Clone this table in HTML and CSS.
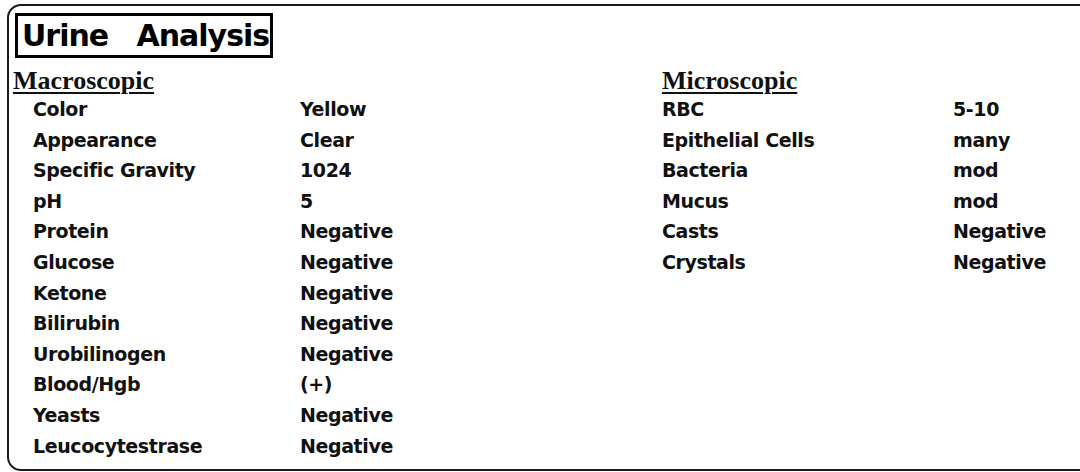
FILE: index.html
```html
<!DOCTYPE html>
<html>
<head>
<meta charset="utf-8">
<link rel="stylesheet" href="styles.css">
</head>
<body>
<div class="panel">
  <div class="title">Urine   Analysis</div>
  <div class="sections">
    <div class="section macro">
      <div class="heading">Macroscopic</div>
      <div class="rows">
        <div class="label">Color</div><div class="value">Yellow</div>
        <div class="label">Appearance</div><div class="value">Clear</div>
        <div class="label">Specific Gravity</div><div class="value">1024</div>
        <div class="label">pH</div><div class="value">5</div>
        <div class="label">Protein</div><div class="value">Negative</div>
        <div class="label">Glucose</div><div class="value">Negative</div>
        <div class="label">Ketone</div><div class="value">Negative</div>
        <div class="label">Bilirubin</div><div class="value">Negative</div>
        <div class="label">Urobilinogen</div><div class="value">Negative</div>
        <div class="label">Blood/Hgb</div><div class="value">(+)</div>
        <div class="label">Yeasts</div><div class="value">Negative</div>
        <div class="label">Leucocytestrase</div><div class="value">Negative</div>
      </div>
    </div>
    <div class="section micro">
      <div class="heading">Microscopic</div>
      <div class="rows">
        <div class="label">RBC</div><div class="value">5-10</div>
        <div class="label">Epithelial Cells</div><div class="value">many</div>
        <div class="label">Bacteria</div><div class="value">mod</div>
        <div class="label">Mucus</div><div class="value">mod</div>
        <div class="label">Casts</div><div class="value">Negative</div>
        <div class="label">Crystals</div><div class="value">Negative</div>
      </div>
    </div>
  </div>
</div>
</body>
</html>
```
FILE: styles.css
```css
html, body {
  margin: 0;
  padding: 0;
  background: #fff;
  overflow: hidden;
}
body {
  width: 1080px;
  height: 472px;
  font-family: "DejaVu Sans", Verdana, sans-serif;
  color: #111;
}
.panel {
  box-sizing: border-box;
  margin: 4px 0 0 7px;
  width: 1100px;
  height: 467px;
  border: 2px solid #1a1a1a;
  border-radius: 14px;
  padding: 7px 0 0 4px;
}
.title {
  display: inline-block;
  white-space: pre;
  margin-left: 2px;
  border: 3px solid #000;
  font-weight: bold;
  font-size: 30px;
  letter-spacing: -1px;
  line-height: 39px;
  padding: 0 1px 0 4px;
  color: #000;
}
.sections {
  display: grid;
  grid-template-columns: 649px 1fr;
}
.heading {
  font-family: "Liberation Serif", "Times New Roman", serif;
  font-weight: bold;
  font-size: 26px;
  line-height: 27px;
  padding-top: 9px;
  text-decoration: underline;
  text-decoration-thickness: 2px;
  text-underline-offset: 3px;
}
.rows {
  display: grid;
  font-weight: bold;
  font-size: 19px;
  letter-spacing: -0.4px;
  line-height: 30.6px;
}
.macro .rows {
  grid-template-columns: 267px 1fr;
  padding-left: 20px;
}
.micro .rows {
  grid-template-columns: 291px 1fr;
}
```
